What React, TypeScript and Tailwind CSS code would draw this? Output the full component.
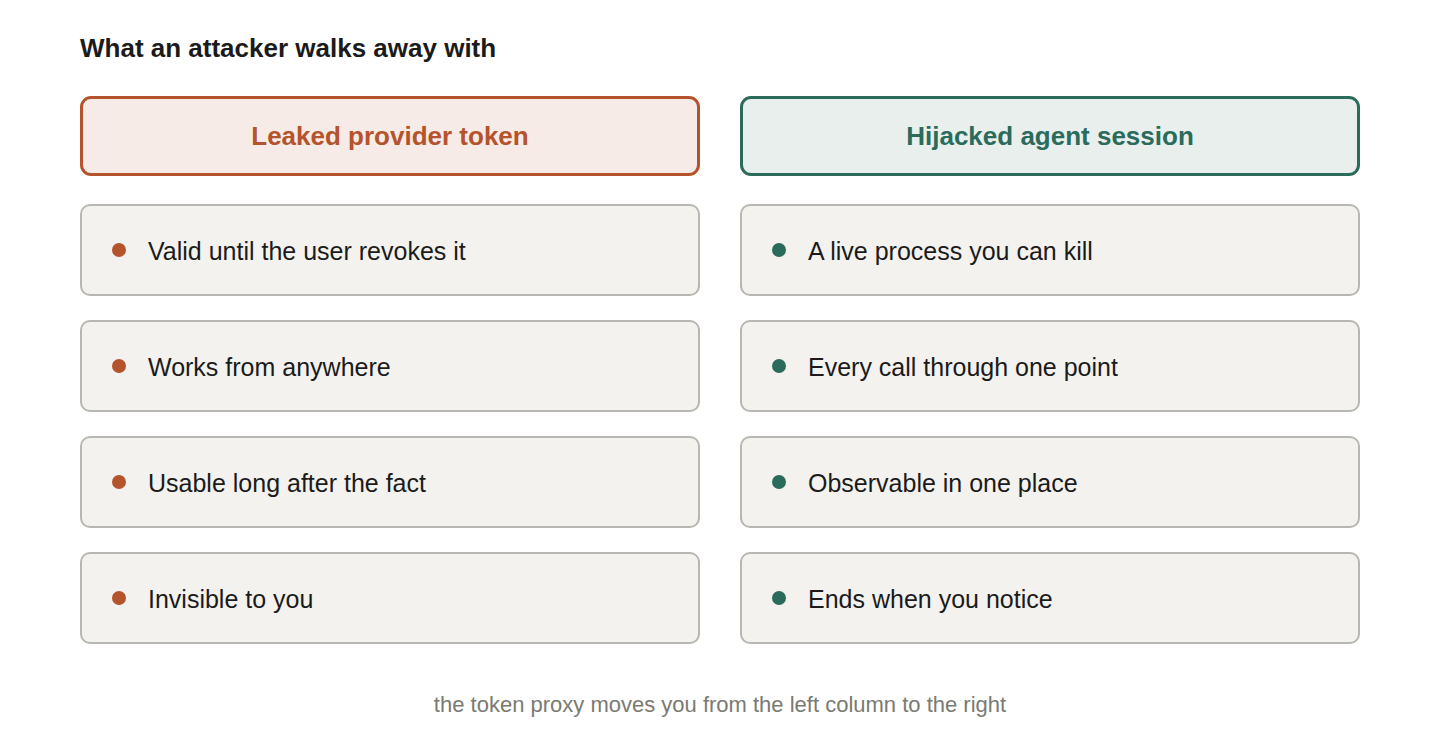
import React from "react";

const left = [
  "Valid until the user revokes it",
  "Works from anywhere",
  "Usable long after the fact",
  "Invisible to you",
];
const right = [
  "A live process you can kill",
  "Every call through one point",
  "Observable in one place",
  "Ends when you notice",
];

function Item({ text, dot }: { text: string; dot: string }) {
  return (
    <div className="h-[92px] rounded-[10px] border-2 border-[#b9b7b1] bg-[#f3f2ee] flex items-center pl-[30px]">
      <span className={`w-[14px] h-[14px] rounded-full ${dot} shrink-0`} />
      <span className="ml-[22px] text-[25px] text-[#1b1b1b] leading-none pt-[2px]">{text}</span>
    </div>
  );
}

export default function App() {
  return (
    <div
      className="w-[1440px] h-[744px] bg-white px-20 pt-[30px]"
      style={{ fontFamily: '"Liberation Sans", Arial, sans-serif' }}
    >
      <h1 className="text-[26px] font-bold text-[#1b1b1b] leading-[36px]">What an attacker walks away with</h1>
      <div className="grid grid-cols-2 gap-x-10 mt-[30px]">
        <div className="flex flex-col">
          <div className="h-[80px] rounded-[11px] border-[3px] border-[#b4532c] bg-[#f6ebe6] flex items-center justify-center text-[26px] font-bold text-[#b4532c]">
            Leaked provider token
          </div>
          <div className="flex flex-col gap-6 mt-7">
            {left.map((t) => (
              <Item key={t} text={t} dot="bg-[#b4532c]" />
            ))}
          </div>
        </div>
        <div className="flex flex-col">
          <div className="h-[80px] rounded-[11px] border-[3px] border-[#2b6b5c] bg-[#e8efec] flex items-center justify-center text-[26px] font-bold text-[#2b6b5c]">
            Hijacked agent session
          </div>
          <div className="flex flex-col gap-6 mt-7">
            {right.map((t) => (
              <Item key={t} text={t} dot="bg-[#2b6b5c]" />
            ))}
          </div>
        </div>
      </div>
      <p className="text-center text-[22px] text-[#7a7a72] mt-[46px] leading-[30px]">
        the token proxy moves you from the left column to the right
      </p>
    </div>
  );
}
